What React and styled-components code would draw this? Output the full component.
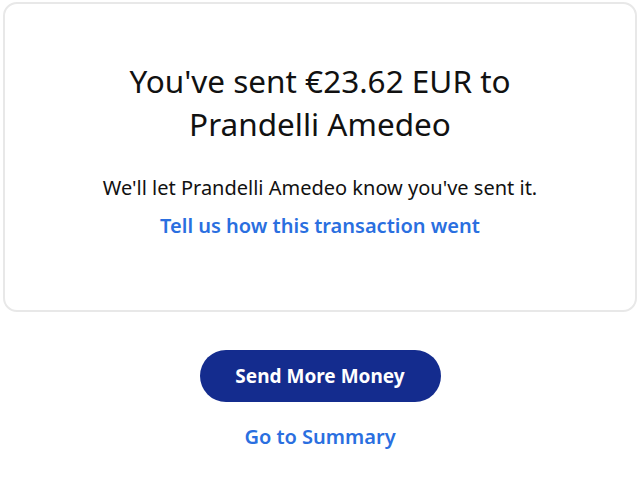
import React from "react";
import styled, { createGlobalStyle } from "styled-components";

const GlobalStyle = createGlobalStyle`
  html, body {
    margin: 0;
    padding: 0;
    background: #ffffff;
  }
  body {
    font-family: "Noto Sans", "Open Sans", "Liberation Sans", sans-serif;
    color: #111111;
  }
`;

const Page = styled.div`
  width: 640px;
  padding: 2px 3px 0 3px;
  box-sizing: border-box;
  display: flex;
  flex-direction: column;
  align-items: center;
`;

const Card = styled.div`
  width: 100%;
  height: 310px;
  box-sizing: border-box;
  border: 2px solid #e8e8e8;
  border-radius: 14px;
  padding-top: 55px;
  display: flex;
  flex-direction: column;
  align-items: center;
  text-align: center;
`;

const Title = styled.h1`
  margin: 0;
  font-size: 31.5px;
  line-height: 43px;
  font-weight: 400;
  color: #111111;
  max-width: 460px;
`;

const Message = styled.p`
  margin: 30px 0 0 0;
  font-size: 20px;
  line-height: 26px;
  color: #111111;
`;

const TextLink = styled.a`
  display: block;
  margin-top: ${(p) => p.$top || 0}px;
  font-size: 20px;
  line-height: 26px;
  font-weight: 600;
  color: #2a6fe0;
  text-decoration: none;
  cursor: pointer;
`;

const PrimaryButton = styled.button`
  margin-top: 38px;
  width: 241px;
  height: 52px;
  border: none;
  border-radius: 26px;
  background: #142c8e;
  color: #ffffff;
  font-family: inherit;
  font-size: 19px;
  font-weight: 700;
  cursor: pointer;
`;

export default function App() {
  return (
    <>
      <GlobalStyle />
      <Page>
        <Card>
          <Title>You've sent €23.62 EUR to Prandelli Amedeo</Title>
          <Message>We'll let Prandelli Amedeo know you've sent it.</Message>
          <TextLink $top={12}>Tell us how this transaction went</TextLink>
        </Card>
        <PrimaryButton>Send More Money</PrimaryButton>
        <TextLink $top={22}>Go to Summary</TextLink>
      </Page>
    </>
  );
}
